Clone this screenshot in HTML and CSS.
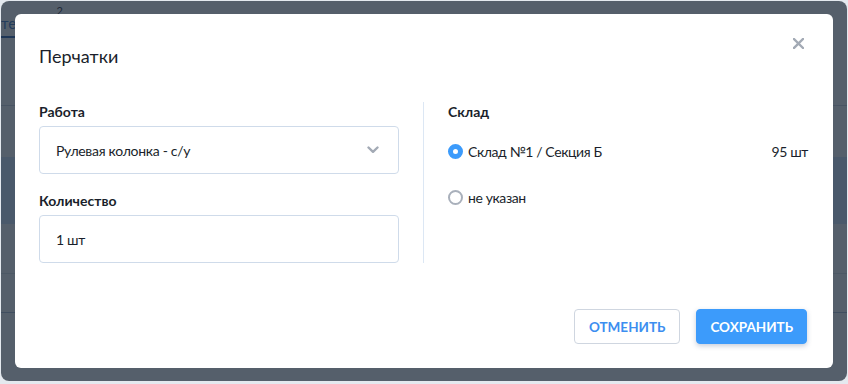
FILE: index.html
```html
<!DOCTYPE html>
<html lang="ru">
<head>
<meta charset="utf-8">
<title>Перчатки</title>
<link rel="stylesheet" href="styles.css">
</head>
<body>
<div class="screen">
  <div class="page">
    <div class="tabs">
      <div class="tab active">тер</div>
      <div class="tab count">2</div>
    </div>
    <div class="row r1"></div>
    <div class="row r2"></div>
    <div class="row r3 selected"></div>
    <div class="row r4"></div>
    <div class="row r5"></div>
  </div>
  <div class="overlay">
    <div class="modal">
      <div class="modal-head">
        <h2 class="modal-title">Перчатки</h2>
        <button class="close" aria-label="Закрыть">
          <svg width="11" height="11" viewBox="0 0 11 11"><path d="M1 1L10 10M10 1L1 10" stroke="#a3aab5" stroke-width="2.4" stroke-linecap="square"/></svg>
        </button>
      </div>
      <div class="modal-body">
        <div class="col">
          <div class="field">
            <div class="label">Работа</div>
            <div class="control select">
              <span>Рулевая колонка - с/у</span>
              <svg width="12" height="8" viewBox="0 0 12 8"><path d="M1.5 1.5L6 5.8L10.5 1.5" fill="none" stroke="#a3aab5" stroke-width="2.4" stroke-linecap="round" stroke-linejoin="round"/></svg>
            </div>
          </div>
          <div class="field">
            <div class="label">Количество</div>
            <div class="control">1 шт</div>
          </div>
        </div>
        <div class="divider"></div>
        <div class="col">
          <div class="label">Склад</div>
          <div class="radio-list">
            <div class="radio-row">
              <span class="radio checked"></span>
              <span class="radio-text">Склад №1 / Секция Б</span>
              <span class="qty">95 шт</span>
            </div>
            <div class="radio-row">
              <span class="radio"></span>
              <span class="radio-text">не указан</span>
            </div>
          </div>
        </div>
      </div>
      <div class="modal-foot">
        <button class="btn btn-outline">Отменить</button>
        <button class="btn btn-primary">Сохранить</button>
      </div>
    </div>
  </div>
</div>
</body>
</html>
```

FILE: styles.css
```css
* { box-sizing: border-box; }
html, body { margin: 0; padding: 0; }
body {
  background: #e4e9ef;
  font-family: Lato, "Liberation Sans", sans-serif;
  color: #1d2330;
  width: 848px;
  height: 384px;
  overflow: hidden;
}
.screen {
  position: relative;
  margin: 1px;
  width: 846px;
  height: 380px;
  border-radius: 8px;
  overflow: hidden;
  background: #fff;
}
.page { display: flex; flex-direction: column; }
.tabs {
  height: 37px;
  display: flex;
  align-items: flex-start;
}
.tab {
  font-size: 15px;
  color: #2f6fc2;
  padding-top: 13px;
  height: 37px;
}
.tab.active {
  border-bottom: 2px solid #1a56a8;
  white-space: nowrap;
}
.tab.count {
  font-size: 11px;
  padding-top: 3px;
  margin-left: 32px;
  color: #1d2330;
}
.row { border-bottom: 1px solid #e7ebf0; }
.r1 { height: 68px; border-bottom-color: #c9d2de; }
.r2 { height: 51px; border-bottom: none; }
.r3 { height: 67px; border-bottom: none; }
.r3.selected { background: #d2e6fd; }
.r4 { height: 50px; border-bottom-color: #d9dfe7; }
.r5 { height: 39px; border-bottom-color: #a8b8cf; }

.overlay {
  position: absolute;
  inset: 0;
  background: rgba(31, 45, 61, 0.76);
  display: flex;
  align-items: center;
  justify-content: center;
}
.modal {
  width: 818px;
  height: 354px;
  background: #fff;
  border-radius: 6px;
  padding: 30px 26px 24px 24px;
  display: flex;
  flex-direction: column;
}
.modal-head {
  display: flex;
  justify-content: space-between;
  align-items: flex-start;
}
.modal-title {
  margin: 0;
  font-size: 18px;
  font-weight: 400;
  line-height: 24px;
  color: #1a1f2b;
}
.close {
  border: none;
  background: none;
  padding: 0;
  margin-top: -6px;
  margin-right: 3px;
  width: 11px;
  height: 11px;
  display: flex;
}
.modal-body {
  margin-top: 34px;
  display: grid;
  grid-template-columns: 360px 1px 1fr;
  column-gap: 24px;
}
.col { display: flex; flex-direction: column; }
.field { display: flex; flex-direction: column; }
.field + .field { margin-top: 17px; }
.label {
  font-size: 14px;
  font-weight: 700;
  line-height: 20px;
  color: #1a1f2b;
  margin-bottom: 4px;
}
.control {
  height: 48px;
  border: 1px solid #cfdbea;
  border-radius: 4px;
  padding: 0 16px 0 16px;
  display: flex;
  align-items: center;
  font-size: 14px;
  letter-spacing: -0.3px;
  color: #1a1f2b;
}
.select { justify-content: space-between; padding-right: 19px; }
.divider {
  background: #dce7f4;
  width: 1px;
}
.radio-list { display: flex; flex-direction: column; margin-top: 13px; }
.radio-row {
  display: flex;
  align-items: center;
  height: 24px;
  font-size: 14px;
  letter-spacing: -0.4px;
  color: #1a1f2b;
}
.radio-row + .radio-row { margin-top: 22px; }
.radio {
  width: 15px;
  height: 15px;
  border-radius: 50%;
  border: 2px solid #a9b0bb;
  margin-right: 5px;
  flex: none;
}
.radio.checked {
  border: 5px solid #3c9bfb;
  background: #fff;
}
.radio-text { flex: 1; }
.qty { margin-right: -1px; }
.modal-foot {
  margin-top: auto;
  display: flex;
  justify-content: flex-end;
  gap: 16px;
}
.btn {
  height: 35px;
  border-radius: 4px;
  font-family: Lato, "Liberation Sans", sans-serif;
  font-size: 13.5px;
  font-weight: 700;
  text-transform: uppercase;
  padding: 0 13px;
  cursor: pointer;
}
.btn-outline {
  background: #fff;
  border: 1px solid #cfd6e0;
  color: #3c8ef0;
  padding: 0 14px;
}
.btn-primary {
  background: #3c9bfb;
  border: 1px solid #3c9bfb;
  color: #fff;
  box-shadow: 0 2px 5px rgba(30, 60, 110, 0.25);
}
```
